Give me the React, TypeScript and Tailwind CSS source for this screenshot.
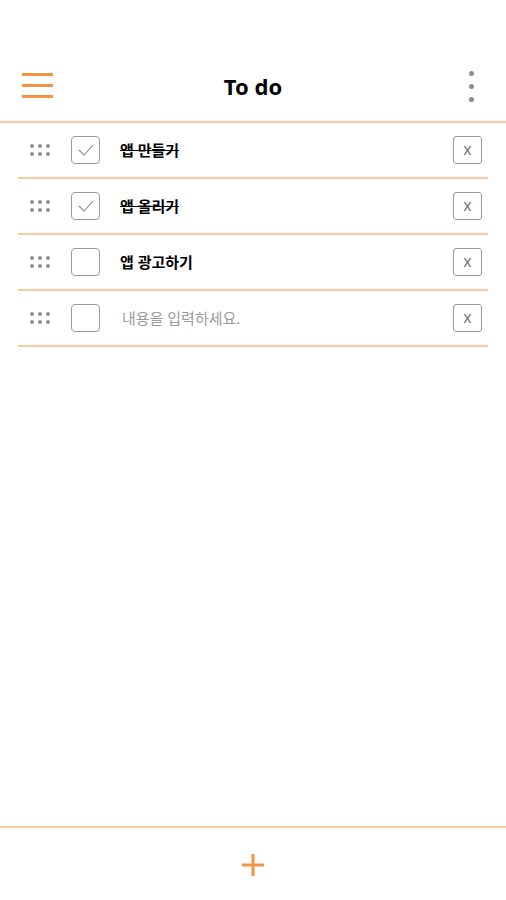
const todos = [
  { text: "앱 만들기", done: true },
  { text: "앱 올리기", done: true },
  { text: "앱 광고하기", done: false },
  { text: "", done: false },
];

function DragHandle() {
  return (
    <div className="grid grid-cols-3 gap-x-[4px] gap-y-[4px] w-[20px] ml-[12px]">
      {[0, 1, 2, 3, 4, 5].map((i) => (
        <span key={i} className="block w-[4px] h-[4px] rounded-full bg-[#8e8e8e]" />
      ))}
    </div>
  );
}

function Checkbox({ checked }: { checked: boolean }) {
  return (
    <div className="w-[29px] h-[28px] rounded-[4px] border border-[#9a9a9a] bg-white flex items-center justify-center">
      {checked && (
        <svg width="20" height="16" viewBox="0 0 20 16" fill="none">
          <polyline points="3,8 8,13 17,3" stroke="#8a8a8a" strokeWidth="1.1" />
        </svg>
      )}
    </div>
  );
}

function TodoRow({ text, done }: { text: string; done: boolean }) {
  return (
    <div className="h-[56px] flex items-center border-b-2 border-[#f8cba3]">
      <DragHandle />
      <div className="ml-[21px]">
        <Checkbox checked={done} />
      </div>
      {text ? (
        <span
          className={`ml-[20px] flex-1 text-[15px] font-bold text-black ${done ? "line-through" : ""}`}
        >
          {text}
        </span>
      ) : (
        <span className="ml-[22px] flex-1 text-[15px] text-[#9a9a9a]">내용을 입력하세요.</span>
      )}
      <button className="mr-[6px] w-[29px] h-[28px] rounded-[3px] border border-[#9a9a9a] bg-white text-[#777] text-[16px] leading-none flex items-center justify-center pb-[2px]">
        x
      </button>
    </div>
  );
}

export default function App() {
  return (
    <div
      className="h-[900px] w-full bg-white flex flex-col"
      style={{ fontFamily: '"Noto Sans", "Noto Sans CJK KR", sans-serif' }}
    >
      <header className="mt-[51px] h-[72px] grid grid-cols-[1fr_auto_1fr] items-center pl-[22px] pr-[32px] border-b-2 border-[#f8cba3]">
        <div className="flex flex-col gap-[8px] w-[31px] pb-[1px]">
          <span className="block h-[3px] bg-[#f39444]" />
          <span className="block h-[3px] bg-[#f39444]" />
          <span className="block h-[3px] bg-[#f39444]" />
        </div>
        <h1 className="text-[22px] font-bold text-black pl-[10px]">To do</h1>
        <div className="flex flex-col gap-[8px] items-center w-[6px] justify-self-end">
          <span className="block w-[5px] h-[5px] rounded-full bg-[#8c8c8c]" />
          <span className="block w-[5px] h-[5px] rounded-full bg-[#8c8c8c]" />
          <span className="block w-[5px] h-[5px] rounded-full bg-[#8c8c8c]" />
        </div>
      </header>

      <div className="mx-[18px]">
        {todos.map((t, i) => (
          <TodoRow key={i} text={t.text} done={t.done} />
        ))}
      </div>

      <div className="flex-1" />

      <footer className="h-[74px] border-t-2 border-[#f8cba3] flex items-center justify-center">
        <svg width="22" height="24" viewBox="0 0 22 24" className="mt-[2px]">
          <path d="M11 1 V23 M0 12 H22" stroke="#f39444" strokeWidth="3" />
        </svg>
      </footer>
    </div>
  );
}
